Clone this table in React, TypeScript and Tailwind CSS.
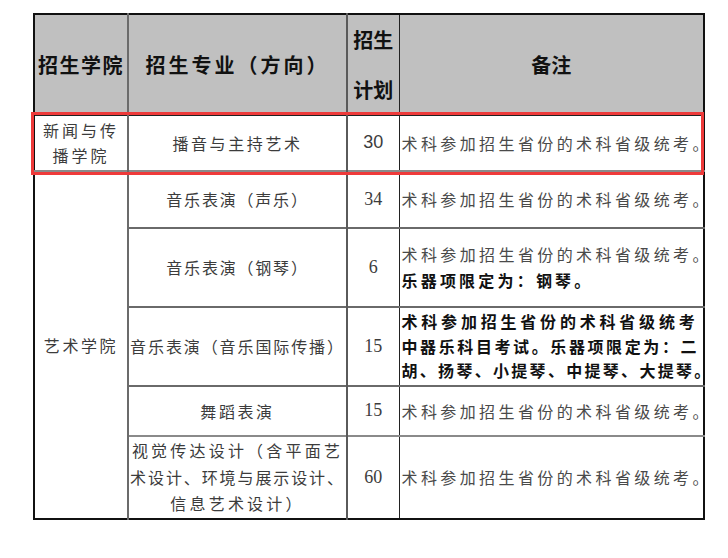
import React from "react";

const font = { fontFamily: '"Noto Sans CJK SC", "Noto Sans", sans-serif' };

export default function App() {
  const remark = "术科参加招生省份的术科省级统考。";
  return (
    <div className="relative w-[728px] h-[558px] bg-white pt-[13px] pl-[33px]" style={font}>
      <table className="table-fixed border-collapse w-[670px] border-2 border-[#111]">
        <colgroup>
          <col className="w-[94px]" />
          <col className="w-[219px]" />
          <col className="w-[52px]" />
          <col className="w-[305px]" />
        </colgroup>
        <thead>
          <tr className="h-[100px] bg-[#c0c0c0] text-[#111] font-bold text-[20px]">
            <th className="border-r-2 border-[#6b6b6b] p-0 font-bold tracking-[1.5px]">招生学院</th>
            <th className="border-r-2 border-[#5a5a5a] p-0 font-bold tracking-[3px]">招生专业（方向）</th>
            <th className="border-r border-[#222] p-0 font-bold leading-[50px]">
              <div>招生</div>
              <div>计划</div>
            </th>
            <th className="p-0 font-bold">备注</th>
          </tr>
        </thead>
        <tbody className="text-[16px] text-[#3c3c3c]">
          <tr className="h-[55px] border-t border-[#222] border-b-2 border-b-[#8a8a8a]">
            <td className="border-r-2 border-[#6b6b6b] text-center leading-[25px] tracking-[3px] p-0">
              <div>新闻与传</div>
              <div>播学院</div>
            </td>
            <td className="border-r-2 border-[#5a5a5a] text-center tracking-[2.6px] p-0">播音与主持艺术</td>
            <td className="border-r border-[#222] text-center p-0 text-[18px]" style={{ fontFamily: '"Liberation Sans", sans-serif' }}>30</td>
            <td className="p-0 pl-[2px] tracking-[3.4px] whitespace-nowrap text-[#4a4a4a]">{remark}</td>
          </tr>
          <tr className="h-[57px] border-b-2 border-b-[#6a6a6a]">
            <td rowSpan={5} className="border-r-2 border-[#6b6b6b] text-center tracking-[2.6px] p-0">艺术学院</td>
            <td className="border-r-2 border-[#5a5a5a] text-center tracking-[1.8px] p-0">音乐表演（声乐）</td>
            <td className="border-r border-[#222] text-center p-0 text-[18px]" style={{ fontFamily: '"Liberation Serif", serif' }}>34</td>
            <td className="p-0 pl-[2px] tracking-[3.4px] whitespace-nowrap text-[#4a4a4a]">{remark}</td>
          </tr>
          <tr className="h-[79px] border-b-2 border-b-[#6a6a6a]">
            <td className="border-r-2 border-[#5a5a5a] text-center tracking-[1.8px] p-0">音乐表演（钢琴）</td>
            <td className="border-r border-[#222] text-center p-0 text-[18px]" style={{ fontFamily: '"Liberation Serif", serif' }}>6</td>
            <td className="p-0 pl-[2px] leading-[26px] whitespace-nowrap">
              <div className="tracking-[3.4px] text-[#4a4a4a]">{remark}</div>
              <div className="tracking-[3.2px] font-bold text-[#111]">乐器项限定为：钢琴。</div>
            </td>
          </tr>
          <tr className="h-[79px] border-b-2 border-b-[#6a6a6a]">
            <td className="border-r-2 border-[#5a5a5a] text-center tracking-[1.9px] p-0 whitespace-nowrap">音乐表演（音乐国际传播）</td>
            <td className="border-r border-[#222] text-center p-0 text-[18px]" style={{ fontFamily: '"Liberation Serif", serif' }}>15</td>
            <td className="p-0 pl-[2px] leading-[24.5px] whitespace-nowrap font-bold text-[#111]">
              <div className="tracking-[3.8px]">术科参加招生省份的术科省级统考</div>
              <div className="tracking-[2.6px]">中器乐科目考试。乐器项限定为：二</div>
              <div className="tracking-[2.3px]">胡、扬琴、小提琴、中提琴、大提琴。</div>
            </td>
          </tr>
          <tr className="h-[50px] border-b-2 border-b-[#8a8a8a]">
            <td className="border-r-2 border-[#5a5a5a] text-center tracking-[2.6px] p-0">舞蹈表演</td>
            <td className="border-r border-[#222] text-center p-0 text-[18px]" style={{ fontFamily: '"Liberation Serif", serif' }}>15</td>
            <td className="p-0 pl-[2px] tracking-[3.4px] whitespace-nowrap text-[#4a4a4a]">{remark}</td>
          </tr>
          <tr className="h-[83px]">
            <td className="border-r-2 border-[#5a5a5a] text-center p-0 leading-[26.5px] whitespace-nowrap">
              <div className="tracking-[3.2px]">视觉传达设计（含平面艺</div>
              <div className="tracking-[1.9px]">术设计、环境与展示设计、</div>
              <div className="tracking-[3.2px]">信息艺术设计）</div>
            </td>
            <td className="border-r border-[#222] text-center p-0 text-[18px]" style={{ fontFamily: '"Liberation Serif", serif' }}>60</td>
            <td className="p-0 pl-[2px] tracking-[3.4px] whitespace-nowrap text-[#4a4a4a]">{remark}</td>
          </tr>
        </tbody>
      </table>
      <div className="absolute left-[31px] top-[112px] w-[673px] h-[63px] border-[3px] border-[#ee3a3a] pointer-events-none" />
    </div>
  );
}
